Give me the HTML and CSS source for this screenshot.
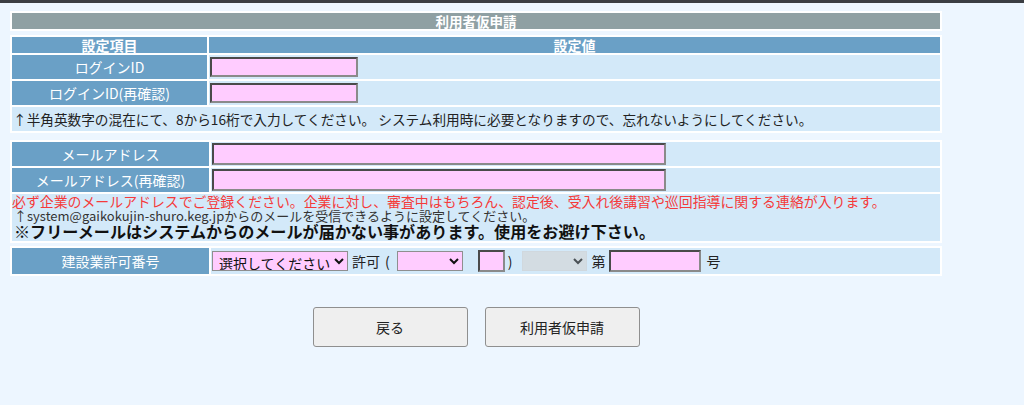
FILE: index.html
```html
<!DOCTYPE html>
<html lang="ja">
<head>
<meta charset="utf-8">
<title>利用者仮申請</title>
<link rel="stylesheet" href="styles.css">
</head>
<body>
<div class="topbar"></div>
<div class="wrap">
  <div class="title">利用者仮申請</div>

  <table class="form t1">
    <tr>
      <th class="lab">設定項目</th>
      <th class="val">設定値</th>
    </tr>
    <tr>
      <td class="lab">ログインID</td>
      <td class="val"><input class="in id" type="text"></td>
    </tr>
    <tr>
      <td class="lab">ログインID(再確認)</td>
      <td class="val"><input class="in id" type="text"></td>
    </tr>
    <tr>
      <td class="note" colspan="2">↑半角英数字の混在にて、8から16桁で入力してください。 システム利用時に必要となりますので、忘れないようにしてください。</td>
    </tr>
  </table>

  <table class="form t2">
    <tr>
      <td class="lab">メールアドレス</td>
      <td class="val"><input class="in mail" type="text"></td>
    </tr>
    <tr>
      <td class="lab">メールアドレス(再確認)</td>
      <td class="val"><input class="in mail" type="text"></td>
    </tr>
    <tr>
      <td class="notes" colspan="2">
        <div class="red">必ず企業のメールアドレスでご登録ください。企業に対し、審査中はもちろん、認定後、受入れ後講習や巡回指導に関する連絡が入ります。</div>
        <div class="small">↑system@gaikokujin-shuro.keg.jpからのメールを受信できるように設定してください。</div>
        <div class="big">※フリーメールはシステムからのメールが届かない事があります。使用をお避け下さい。</div>
      </td>
    </tr>
  </table>

  <table class="form t3">
    <tr>
      <td class="lab">建設業許可番号</td>
      <td class="val">
        <div class="permit">
          <select class="sel pref"><option>選択してください</option></select>
          <span class="txt">許可</span><span class="txt paren">(</span>
          <select class="sel kind"><option></option></select>
          <input class="in num" type="text">
          <span class="txt paren">)</span>
          <select class="sel dis" disabled><option></option></select>
          <span class="txt">第</span>
          <input class="in no" type="text">
          <span class="txt">号</span>
        </div>
      </td>
    </tr>
  </table>

  <div class="buttons">
    <button class="btn" type="button">戻る</button>
    <button class="btn" type="button">利用者仮申請</button>
  </div>
</div>
</body>
</html>
```

FILE: styles.css
```css
html, body {
  margin: 0;
  padding: 0;
}
body {
  background: #edf6ff;
  font-family: "Noto Sans CJK JP", "Noto Sans", sans-serif;
  font-size: 14px;
  color: #222;
}
.topbar {
  height: 3px;
  background: #3b3e43;
}
.wrap {
  width: 932px;
  margin: 8px 0 0 10px;
}
.title {
  border: 2px solid #fff;
  background: #8fa0a3;
  height: 16px;
  line-height: 16px;
  text-align: center;
  color: #fff;
  font-weight: bold;
  font-size: 13.5px;
}
.form {
  width: 100%;
  border-collapse: separate;
  border-spacing: 2px;
  background: #fff;
}
.t1 { margin-top: 4px; }
.t2 { margin-top: 7px; }
.t3 { margin-top: 3px; }
.form th, .form td {
  padding: 0;
  vertical-align: middle;
}
.form th {
  height: 16px;
  line-height: 16px;
  background: #6aa0c6;
  color: #fff;
  font-weight: bold;
  font-size: 14px;
  text-align: center;
}
.form td.lab {
  width: 195px;
  background: #6aa0c6;
  color: #fff;
  text-align: center;
  height: 24px;
  line-height: 16px;
}
.t1 th.lab { width: 195px; }
.t2 td.lab, .t3 td.lab { width: 197px; }
.form td.val {
  background: #d3e9f9;
  height: 24px;
  padding-left: 1px;
}
.t3 td.val { height: 26px; }
.form td.note {
  background: #d3e9f9;
  height: 24px;
  font-size: 13.65px;
  line-height: 16px;
  padding-left: 1px;
  color: #222;
}
.form td.notes {
  background: #d3e9f9;
  height: 47px;
  padding: 0;
  vertical-align: top;
}
.red {
  color: #f53a3a;
  font-size: 13.9px;
  line-height: 15px;
}
.small {
  color: #333;
  font-size: 13px;
  line-height: 13px;
  padding-left: 2px;
}
.big {
  color: #111;
  font-size: 16.1px;
  font-weight: bold;
  line-height: 18px;
  padding-left: 2px;
}
.in {
  display: block;
  box-sizing: border-box;
  background: #ffccff;
  border: 2px solid;
  border-color: #4a4a4a #8a8a8a #8a8a8a #4a4a4a;
  padding: 0;
  margin: 0;
  font: inherit;
}
.in.id {
  width: 148px;
  height: 20px;
}
.in.mail {
  width: 454px;
  height: 22px;
}
.permit {
  display: flex;
  align-items: center;
}
.sel {
  box-sizing: border-box;
  height: 20px;
  background-color: #ffccff;
  border: 1px solid #8f8f8f;
  border-radius: 0;
  font-family: inherit;
  font-size: 14px;
  color: #111;
  margin: 0;
  padding: 0 0 0 2px;
}
.sel.pref { width: 136px; }
.sel.kind { width: 66px; margin-left: 7px; }
.sel.dis {
  width: 65px;
  margin-left: 10px;
  background-color: #d4d7d9;
  border-color: #cfd2d4;
}
.txt {
  color: #222;
  font-size: 14px;
  line-height: 20px;
}
.pref + .txt { margin-left: 4px; }
.txt.paren { margin-left: 5px; }
.in.num {
  width: 27px;
  height: 22px;
  margin-left: 15px;
}
.in.num + .txt.paren { margin-left: 3px; }
.dis + .txt { margin-left: 4px; }
.in.no {
  width: 92px;
  height: 22px;
  margin-left: 4px;
}
.in.no + .txt { margin-left: 5px; }
.buttons {
  display: flex;
  justify-content: center;
  gap: 17px;
  margin-top: 31px;
}
.btn {
  width: 155px;
  height: 40px;
  background: #efefef;
  border: 1px solid #8f8f8f;
  border-radius: 3px;
  font-family: inherit;
  font-size: 14px;
  color: #222;
  padding: 0;
}
```
